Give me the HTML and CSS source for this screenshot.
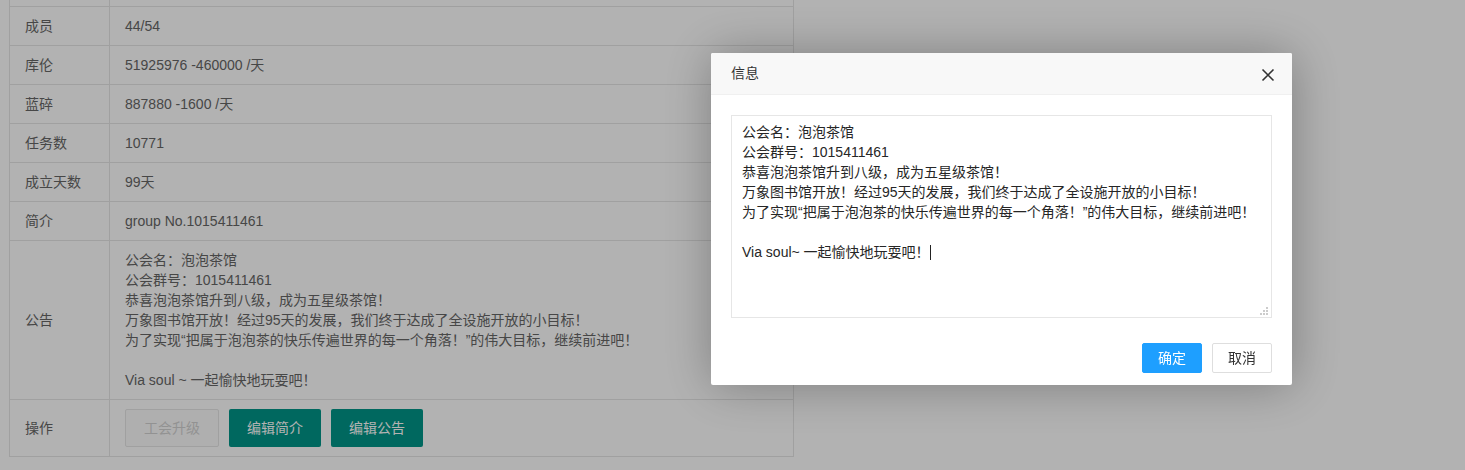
FILE: index.html
```html
<!DOCTYPE html>
<html lang="zh-CN">
<head>
<meta charset="UTF-8" />
<title>公会信息</title>
<link rel="stylesheet" href="styles.css">
</head>
<body>

  <!-- Guild info table -->
  <div class="page">
    <table class="info-table">
      <tr><td class="label">&nbsp;</td><td>&nbsp;</td></tr>
      <tr><td class="label">成员</td><td>44/54</td></tr>
      <tr><td class="label">库伦</td><td>51925976 -460000 /天</td></tr>
      <tr><td class="label">蓝碎</td><td>887880 -1600 /天</td></tr>
      <tr><td class="label">任务数</td><td>10771</td></tr>
      <tr><td class="label">成立天数</td><td>99天</td></tr>
      <tr><td class="label">简介</td><td>group No.1015411461</td></tr>
      <tr>
        <td class="label">公告</td>
        <td class="notice">公会名：泡泡茶馆
公会群号：1015411461
恭喜泡泡茶馆升到八级，成为五星级茶馆！
万象图书馆开放！经过95天的发展，我们终于达成了全设施开放的小目标！
为了实现“把属于泡泡茶的快乐传遍世界的每一个角落！”的伟大目标，继续前进吧！

Via soul ~ 一起愉快地玩耍吧！</td>
      </tr>
      <tr>
        <td class="label">操作</td>
        <td>
          <div class="btn-row">
            <button class="btn btn-disabled">工会升级</button>
            <button class="btn">编辑简介</button>
            <button class="btn">编辑公告</button>
          </div>
        </td>
      </tr>
    </table>
  </div>

  <!-- Shade + dialog -->
  <div class="shade"></div>
  <div class="dialog">
    <div class="dialog-title">
      信息
      <span class="dialog-close">
        <svg width="14" height="14" viewBox="0 0 14 14"><path d="M1.5 1.5 L12.5 12.5 M12.5 1.5 L1.5 12.5" stroke="#333" stroke-width="1.6" fill="none"/></svg>
      </span>
    </div>
    <div class="dialog-content">
      <textarea class="notice-edit">公会名：泡泡茶馆
公会群号：1015411461
恭喜泡泡茶馆升到八级，成为五星级茶馆！
万象图书馆开放！经过95天的发展，我们终于达成了全设施开放的小目标！
为了实现“把属于泡泡茶的快乐传遍世界的每一个角落！”的伟大目标，继续前进吧！

Via soul~ 一起愉快地玩耍吧！</textarea>
      <span class="caret"></span>
      <svg class="grip" width="9" height="9" viewBox="0 0 9 9">
        <rect x="0" y="7" width="2" height="2" fill="#ccc"/>
        <rect x="3" y="4" width="2" height="2" fill="#ccc"/>
        <rect x="3" y="7" width="2" height="2" fill="#ccc"/>
        <rect x="6" y="1" width="2" height="2" fill="#ccc"/>
        <rect x="6" y="4" width="2" height="2" fill="#ccc"/>
        <rect x="6" y="7" width="2" height="2" fill="#ccc"/>
      </svg>
    </div>
    <div class="dialog-btns">
      <a class="dbtn dbtn-primary">确定</a>
      <a class="dbtn">取消</a>
    </div>
  </div>

</body>
</html>
```

FILE: styles.css
```css
body {
  margin: 0;
  background: #fff;
  font-family: "Liberation Sans", "Noto Sans CJK SC", sans-serif;
  font-size: 14px;
  color: #666;
  overflow: hidden;
}

.page {
  padding-left: 9px;
  margin-top: -33px;
}

.info-table {
  width: 785px;
  border-collapse: collapse;
  border-spacing: 0;
}

.info-table td {
  border: 1px solid #e6e6e6;
  padding: 9px 15px;
  line-height: 20px;
  vertical-align: middle;
}

.info-table td.label {
  width: 69px;
}

.info-table td.notice {
  white-space: pre-line;
}

.btn-row {
  display: flex;
  gap: 10px;
}

.btn {
  height: 38px;
  line-height: 36px;
  padding: 0 17px;
  border: 1px solid transparent;
  border-radius: 2px;
  background: #009688;
  color: #fff;
  font-family: inherit;
  font-size: 14px;
  margin: 0;
}

.btn-disabled {
  padding: 0 18px;
  background: #fbfbfb;
  border-color: #e6e6e6;
  color: #d2d2d2;
}

.shade {
  position: fixed;
  top: 0;
  left: 0;
  right: 0;
  bottom: 0;
  background: rgba(0, 0, 0, 0.3);
}

.dialog {
  position: fixed;
  left: 711px;
  top: 53px;
  width: 581px;
  background: #fff;
  border-radius: 2px;
  box-shadow: 1px 1px 50px rgba(0, 0, 0, 0.3);
}

.dialog-title {
  position: relative;
  height: 41px;
  line-height: 41px;
  padding: 0 80px 0 20px;
  background: #f8f8f8;
  border-bottom: 1px solid #f0f0f0;
  border-radius: 2px 2px 0 0;
  color: #333;
  font-size: 14px;
}

.dialog-close {
  position: absolute;
  right: 17px;
  top: 15px;
  width: 14px;
  height: 14px;
  line-height: 0;
}

.dialog-content {
  position: relative;
  padding: 20px;
  line-height: 0;
}

.notice-edit {
  display: block;
  box-sizing: border-box;
  width: 541px;
  height: 203px;
  padding: 6px 10px;
  border: 1px solid #e6e6e6;
  border-radius: 0;
  outline: none;
  font-family: "Liberation Sans", "Noto Sans CJK SC", sans-serif;
  font-size: 14px;
  line-height: 20px;
  color: #262626;
  resize: none;
  margin: 0;
}

/* fake text cursor + resize grip drawn over the textarea */
.caret {
  position: absolute;
  left: 219px;
  top: 150px;
  width: 1px;
  height: 15px;
  background: #222;
}

.grip {
  position: absolute;
  right: 23px;
  bottom: 23px;
}

.dialog-btns {
  display: flex;
  justify-content: flex-end;
  gap: 10px;
  padding: 5px 20px 12px;
}

.dbtn {
  height: 28px;
  line-height: 28px;
  padding: 0 15px;
  border: 1px solid #dedede;
  border-radius: 2px;
  background: #fff;
  color: #333;
  font-size: 14px;
}

.dbtn-primary {
  background: #1e9fff;
  border-color: #1e9fff;
  color: #fff;
}
```
